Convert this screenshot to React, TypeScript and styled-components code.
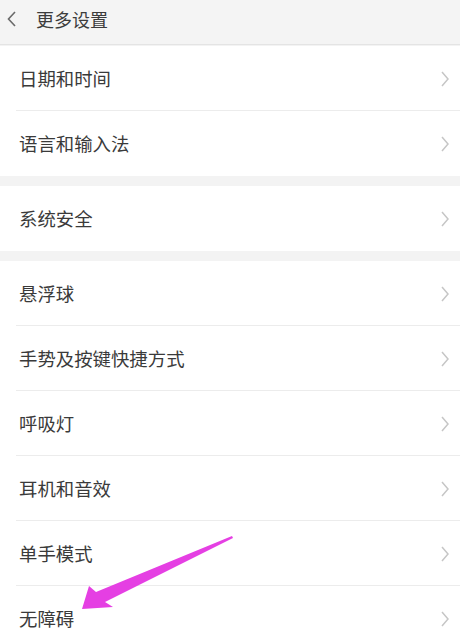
import React from "react";
import styled, { createGlobalStyle } from "styled-components";

const Global = createGlobalStyle`
  html, body { margin: 0; padding: 0; background: #f3f3f3; }
  body { font-family: "Noto Sans CJK SC", "Noto Sans", sans-serif; }
`;

const Page = styled.div`
  position: relative;
  width: 460px;
  height: 636px;
  overflow: hidden;
  background: #f3f3f3;
`;

const Header = styled.div`
  height: 44px;
  display: flex;
  align-items: center;
  background: #f4f4f4;
  border-bottom: 1px solid #e4e4e4;
  padding-left: 6px;
  gap: 18px;
`;

const Title = styled.div`
  font-size: 18px;
  color: #3c3c3c;
  line-height: 1;
  margin-top: -6px;
`;

const BackIcon = styled.svg`
  width: 12px;
  height: 18px;
  margin-top: -6px;
`;

const Group = styled.div<{ $gap: number }>`
  background: #ffffff;
  margin-top: ${(p) => p.$gap}px;
`;

const Row = styled.div`
  height: 65px;
  box-sizing: border-box;
  display: flex;
  align-items: center;
  justify-content: space-between;
  padding: 0 10px 0 19px;
  position: relative;
  &:not(:last-child)::after {
    content: "";
    position: absolute;
    left: 16px;
    right: 0;
    bottom: 0;
    height: 1px;
    background: #ececec;
  }
`;

const Label = styled.span`
  font-size: 18.4px;
  color: #3a3a3a;
  line-height: 1;
`;

const Chevron = styled.svg`
  width: 10px;
  height: 18px;
`;

const ArrowOverlay = styled.svg`
  position: absolute;
  left: 0;
  top: 0;
  width: 460px;
  height: 636px;
  pointer-events: none;
`;

const groups: { gap: number; items: string[] }[] = [
  { gap: 1, items: ["日期和时间", "语言和输入法"] },
  { gap: 10, items: ["系统安全"] },
  { gap: 10, items: ["悬浮球", "手势及按键快捷方式", "呼吸灯", "耳机和音效", "单手模式", "无障碍"] },
];

export default function App() {
  return (
    <>
      <Global />
      <Page>
        <Header>
          <BackIcon viewBox="0 0 12 18">
            <path d="M9 2 L2.5 9 L9 16" fill="none" stroke="#6a6a6a" strokeWidth="1.6" />
          </BackIcon>
          <Title>更多设置</Title>
        </Header>
        {groups.map((g, gi) => (
          <Group key={gi} $gap={g.gap}>
            {g.items.map((t) => (
              <Row key={t}>
                <Label>{t}</Label>
                <Chevron viewBox="0 0 10 18">
                  <path d="M2 2 L8 9 L2 16" fill="none" stroke="#c6c6c6" strokeWidth="1.5" />
                </Chevron>
              </Row>
            ))}
          </Group>
        ))}
        <ArrowOverlay viewBox="0 0 460 636">
          <polygon
            points="232,536 233,538 105,602 113,607 82,609 89,586 96,592"
            fill="#e53fe3"
          />
        </ArrowOverlay>
      </Page>
    </>
  );
}
